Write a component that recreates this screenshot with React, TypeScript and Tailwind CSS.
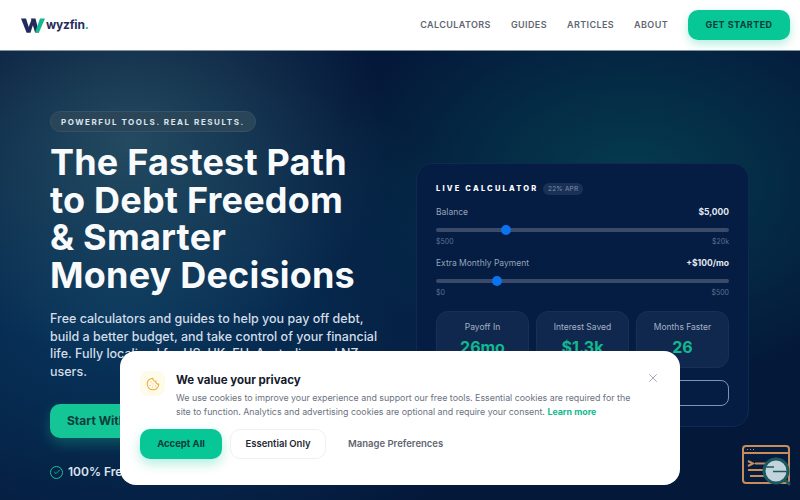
import { Check, Cookie, X } from "lucide-react";

const navLinks = ["Calculators", "Guides", "Articles", "About"];

const Logo = () => (
  <div className="flex items-center gap-[1px]">
    <svg width="24" height="15" viewBox="0 0 24 15" fill="none">
      <path d="M0 0.5H5L9.5 14.5H5.5Z" fill="#232a5c" />
      <path d="M5.5 14.5H9.5L13 4L11 0.5Z" fill="#232a5c" />
      <path d="M10 0.5H14.5L18 14.5H14Z" fill="#232a5c" />
      <path d="M14 14.5H18L24 0.5H19Z" fill="#14b88d" />
    </svg>
    <span className="text-[12px] font-bold leading-none tracking-[-0.2px] text-[#262b5e]">
      wyzfin<span className="text-[#14b88d]">.</span>
    </span>
  </div>
);

const Header = () => (
  <header className="flex h-[51px] shrink-0 items-center justify-between border-b border-[#8292a3] bg-white pl-[21px] pr-[10px]">
    <Logo />
    <nav className="flex items-center gap-5">
      {navLinks.map((link) => (
        <a key={link} className="text-[9px] font-semibold uppercase tracking-[0.4px] text-[#5f6672]">
          {link}
        </a>
      ))}
      <button className="h-[30px] w-[102px] rounded-[10px] bg-[#06c795] text-[9px] font-bold uppercase tracking-[0.45px] text-[#0c3b3c] shadow-[0_4px_10px_rgba(6,199,149,0.3)]">
        Get Started
      </button>
    </nav>
  </header>
);

const Slider = ({
  label,
  value,
  min,
  max,
  thumb,
}: {
  label: string;
  value: string;
  min: string;
  max: string;
  thumb: string;
}) => (
  <div>
    <div className="flex items-center justify-between text-[8.5px] leading-3">
      <span className="text-[#94a3b8]">{label}</span>
      <span className="font-bold text-[#e2e8f0]">{value}</span>
    </div>
    <div className="relative mt-[10px] h-[4px] rounded-full bg-[#3a4a6b]">
      <div className={`absolute top-[-3px] h-[10px] w-[10px] rounded-full bg-[#0b73f0] ${thumb}`} />
    </div>
    <div className="mt-[5px] flex justify-between text-[7px] leading-[10px] text-[#5c6f8f]">
      <span>{min}</span>
      <span>{max}</span>
    </div>
  </div>
);

const Stat = ({ label, value }: { label: string; value: string }) => (
  <div className="h-[57px] flex-1 rounded-xl border border-[#1a2f54] bg-[#11284e] pt-[9px] text-center">
    <div className="text-[8.5px] leading-3 text-[#a3b1c6]">{label}</div>
    <div className="mt-[4px] text-[16px] font-bold leading-[20px] text-[#10b98f]">{value}</div>
  </div>
);

const CalculatorCard = () => (
  <div className="h-[264px] w-[333px] shrink-0 rounded-2xl border border-[#0e2a50] bg-[#051d43] px-[19px] pt-[19px]">
    <div className="flex items-center gap-[5px]">
      <span className="text-[7.5px] font-extrabold uppercase tracking-[2.2px] text-white">Live Calculator</span>
      <span className="rounded-full bg-[#1a3157] px-[4.5px] py-[1px] text-[6.5px] leading-[10px] tracking-[0.2px] text-[#7f8fa8]">
        22% APR
      </span>
    </div>
    <div className="mt-[11px] flex flex-col gap-[10px]">
      <Slider label="Balance" value="$5,000" min="$500" max="$20k" thumb="left-[65px]" />
      <Slider label="Extra Monthly Payment" value="+$100/mo" min="$0" max="$500" thumb="left-[56px]" />
    </div>
    <div className="mt-[13px] flex gap-[7px]">
      <Stat label="Payoff In" value="26mo" />
      <Stat label="Interest Saved" value="$1.3k" />
      <Stat label="Months Faster" value="26" />
    </div>
    <button className="mt-3 h-[26px] w-full rounded-lg border border-[#7d93b4] text-[10px] font-semibold text-white">
      See Full Payoff Plan
    </button>
  </div>
);

const Hero = () => (
  <section className="flex flex-1 items-start justify-between overflow-hidden bg-[#04183a] bg-[radial-gradient(ellipse_260px_220px_at_130px_90px,rgba(48,92,108,0.7),transparent),radial-gradient(ellipse_300px_210px_at_630px_130px,rgba(5,84,92,0.6),transparent),radial-gradient(ellipse_420px_260px_at_120px_270px,rgba(10,70,112,0.65),transparent)] pl-[50px] pr-[51px] pt-[60px]">
    <div className="w-[335px]">
      <div className="flex h-[21px] w-fit items-center rounded-full border border-[#34526a] bg-[#2a4558] px-[10px] text-[8px] font-bold uppercase tracking-[1.55px] text-[#dbe6ee]">
        Powerful Tools. Real Results.
      </div>
      <h1 className="mt-[12px] text-[36px] font-bold leading-[37.5px] tracking-[0.2px] text-[#f8fafc]">
        The Fastest Path
        <br />
        to Debt Freedom
        <br />
        &amp; Smarter
        <br />
        Money Decisions
      </h1>
      <p className="mt-[16px] text-[12.5px] font-medium leading-[17.5px] text-[#d3dde8]">
        Free calculators and guides to help you pay off debt, build a better budget, and take control of your financial
        life. Fully localized for US, UK, EU, Australia, and NZ users.
      </p>
      <button className="mt-[24px] h-[34px] rounded-[10px] bg-[#14c596] px-[17px] text-[12px] font-bold text-[#0c3b3c] shadow-[0_6px_14px_rgba(20,197,150,0.3)]">
        Start With a Calculator
      </button>
      <div className="mt-[26px] flex items-center gap-[5px] text-[12px] font-semibold leading-4 text-[#dbe3ee]">
        <span className="flex h-[13px] w-[13px] items-center justify-center rounded-full border border-[#14c596]">
          <Check size={8} strokeWidth={2.5} className="text-[#14c596]" />
        </span>
        100% Free Forever
      </div>
    </div>
    <div className="mt-[52px]">
      <CalculatorCard />
    </div>
  </section>
);

const CookieBanner = () => (
  <div className="absolute left-[120px] top-[351px] h-[134px] w-[560px] rounded-2xl bg-white pl-[20px] pr-[20px] pt-[20px]">
    <X size={14} strokeWidth={1.5} className="absolute right-[20px] top-[20px] text-[#9aa1ab]" />
    <div className="flex gap-[11px]">
      <div className="flex h-[25px] w-[25px] shrink-0 items-center justify-center rounded-lg bg-[#fefbe8]">
        <Cookie size={14} strokeWidth={1.75} className="text-[#eea93c]" />
      </div>
      <div className="w-[465px]">
        <h2 className="text-[11.5px] font-bold leading-[18px] text-[#141a2b]">We value your privacy</h2>
        <p className="mt-[2px] text-[8.85px] leading-[13.5px] text-[#6b7280]">
          We use cookies to improve your experience and support our free tools. Essential cookies are required for the
          site to function. Analytics and advertising cookies are optional and require your consent.{" "}
          <a className="font-bold text-[#14b88d]">Learn more</a>
        </p>
      </div>
    </div>
    <div className="mt-[11px] flex items-center gap-2">
      <button className="h-[30px] w-[82px] rounded-[10px] bg-[#06c795] text-[9.5px] font-bold text-[#0c3b3c] shadow-[0_5px_12px_rgba(6,199,149,0.3)]">
        Accept All
      </button>
      <button className="h-[30px] w-[96px] rounded-[10px] border border-[#eef0f3] bg-white text-[9.5px] font-semibold text-[#1f2937]">
        Essential Only
      </button>
      <button className="h-[30px] px-[14px] text-[9.5px] font-semibold text-[#5f6672]">Manage Preferences</button>
    </div>
  </div>
);

const CodeWidget = () => (
  <svg className="absolute left-[741px] top-[444px]" width="52" height="44" viewBox="0 0 52 44" fill="none">
    <rect x="2" y="2" width="46" height="37" rx="3" stroke="#c98c5c" strokeWidth="2" fill="#061c3c" />
    <path d="M2 9H48" stroke="#c98c5c" strokeWidth="2" />
    <path d="M6 5.5H7M9 5.5H10M12 5.5H13" stroke="#c98c5c" strokeWidth="1.2" />
    <path d="M7 17L12 19.5L7 22M14 19.5H26M7 26H24M9 32H24" stroke="#c98c5c" strokeWidth="2" />
    <circle cx="35" cy="27" r="12" fill="#c3d3dc" stroke="#1c5a62" strokeWidth="3" />
    <path d="M24 23H33M32 27.5H46" stroke="#1c5a62" strokeWidth="1.6" />
    <path d="M44 36L49 41" stroke="#1c5a62" strokeWidth="2.5" />
  </svg>
);

export default function App() {
  return (
    <div className="relative flex h-[500px] w-[800px] flex-col overflow-hidden font-['Inter',sans-serif]">
      <Header />
      <Hero />
      <CookieBanner />
      <CodeWidget />
    </div>
  );
}
